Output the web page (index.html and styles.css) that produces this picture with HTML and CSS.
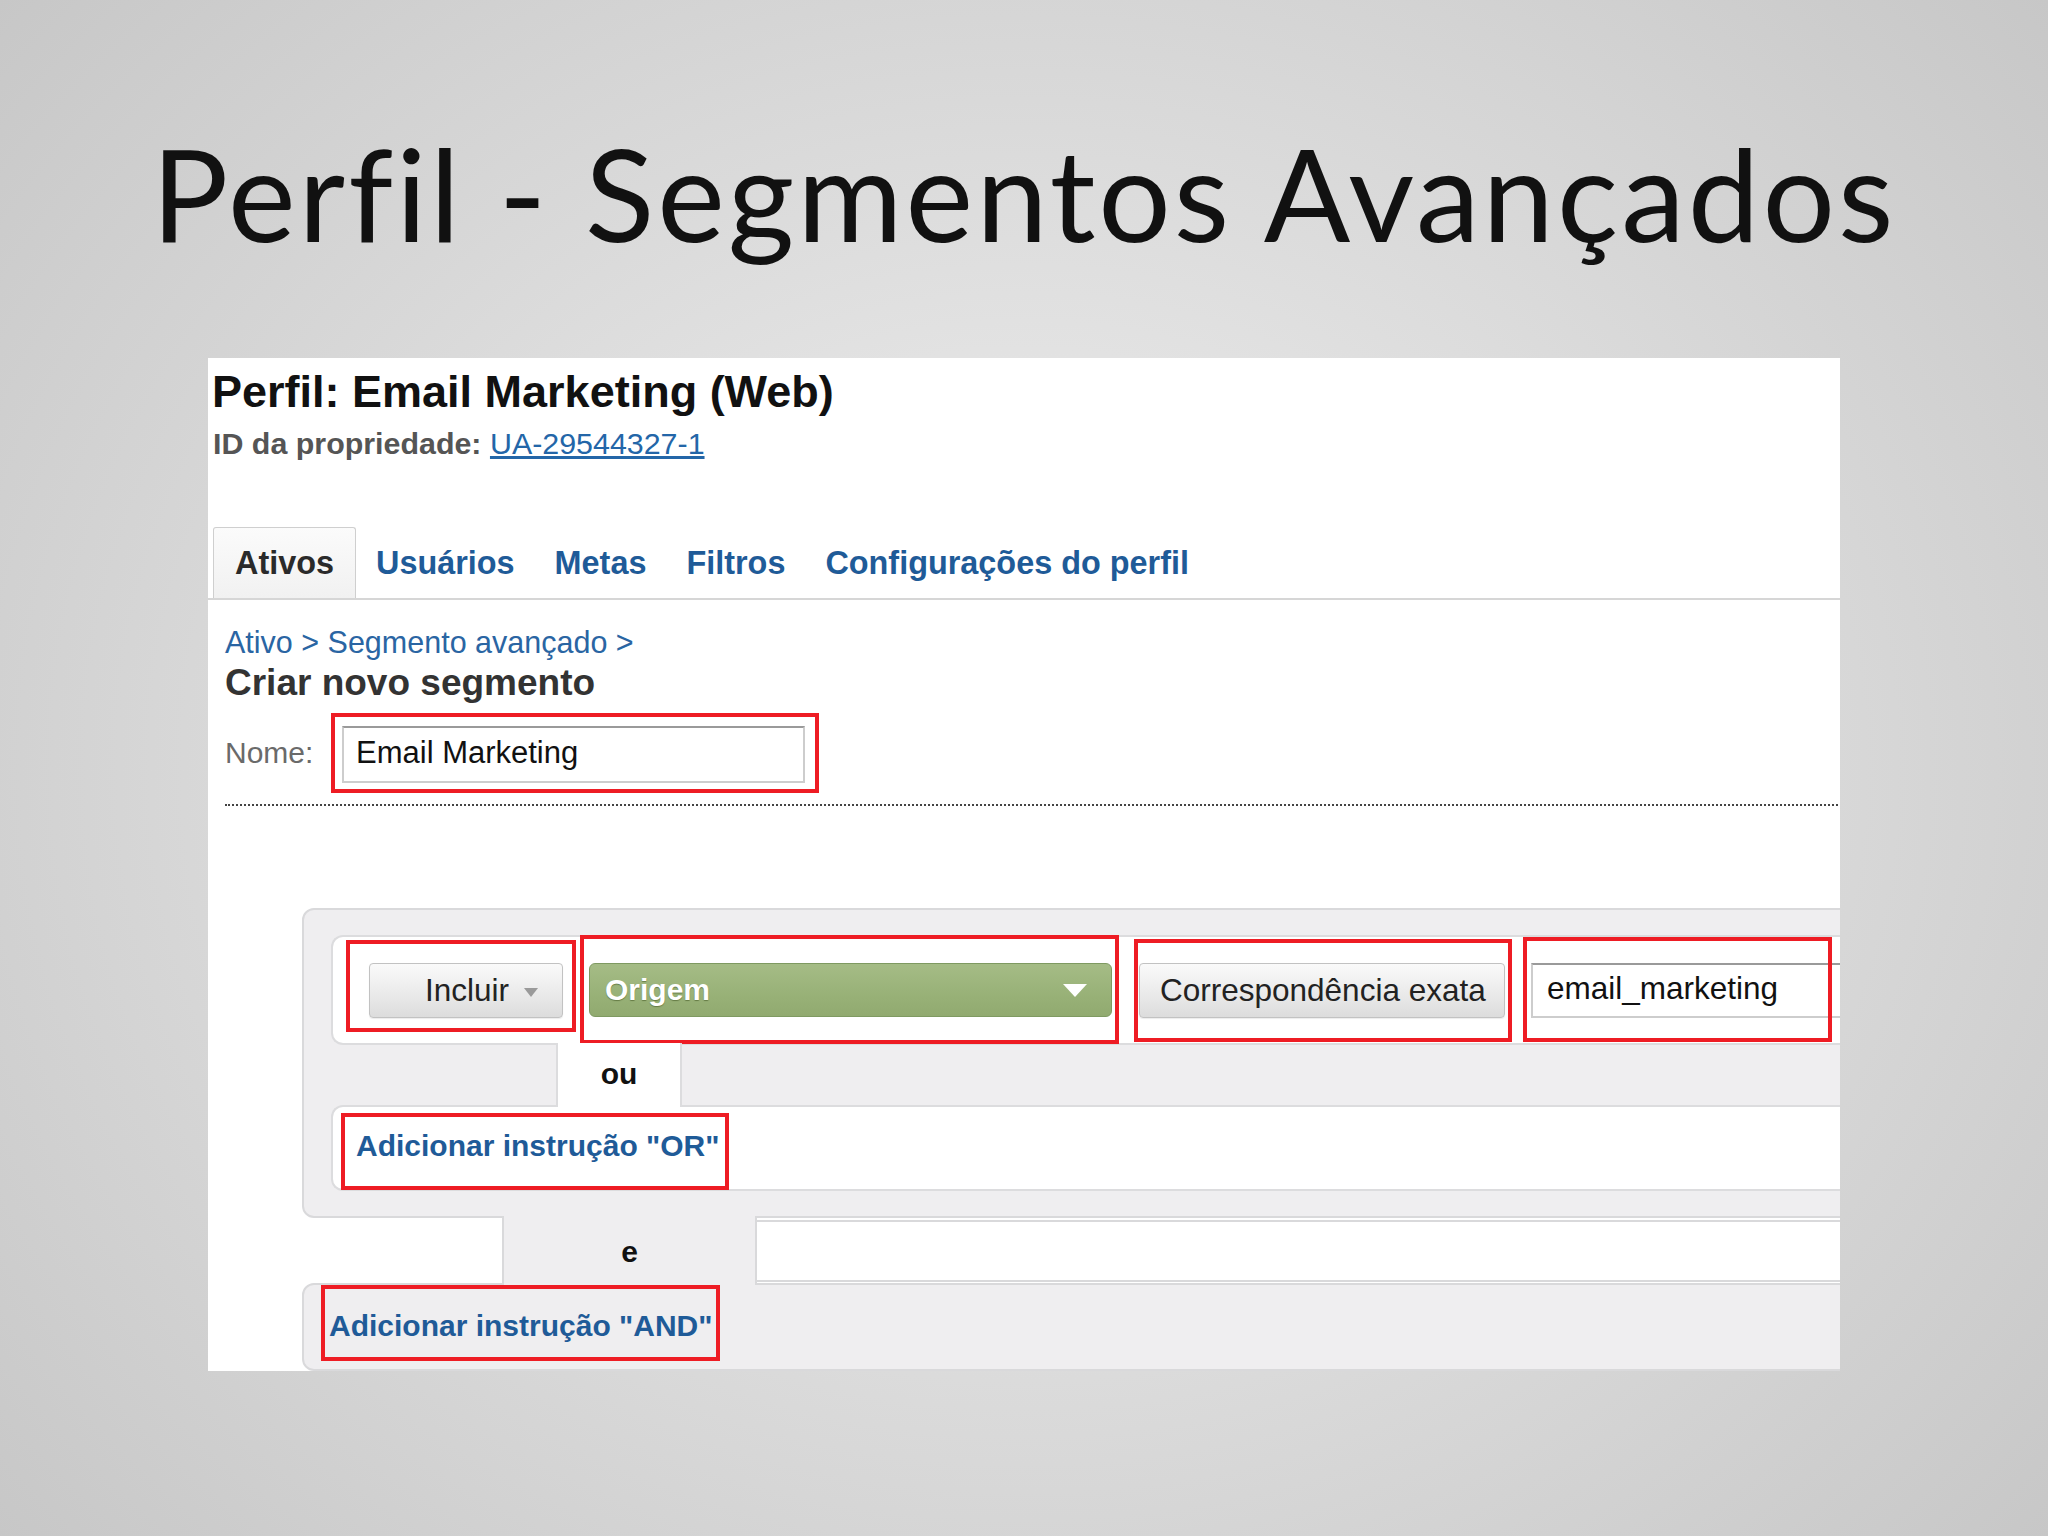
FILE: index.html
```html
<!DOCTYPE html>
<html lang="pt">
<head>
<meta charset="utf-8">
<title>Perfil - Segmentos Avançados</title>
<link rel="stylesheet" href="styles.css">
</head>
<body>
<div class="slide">
  <h1 class="slide-title">Perfil - Segmentos Avançados</h1>
  <div class="shot">
    <div class="profile-title">Perfil: Email Marketing (Web)</div>
    <div class="prop-id"><span class="prop-label">ID da propriedade:</span> <span class="prop-link">UA-29544327-1</span></div>
    <div class="tabs">
      <span class="tab active">Ativos</span>
      <span class="tab">Usuários</span>
      <span class="tab">Metas</span>
      <span class="tab">Filtros</span>
      <span class="tab">Configurações do perfil</span>
    </div>
    <div class="content">
      <div class="crumb">Ativo &gt; Segmento avançado &gt;</div>
      <div class="page-h">Criar novo segmento</div>
      <div class="name-row">
        <span class="name-label">Nome:</span>
        <div class="mark mark-name"><div class="field name-input">Email Marketing</div></div>
      </div>
      <div class="dotted"></div>
    </div>
    <div class="builder">
      <div class="group">
        <div class="cond-row">
          <div class="mark mark-incl"><div class="btn btn-incl">Incluir<span class="caret-gray"></span></div></div>
          <div class="mark mark-origem"><div class="dim-select">Origem<span class="caret-white"></span></div></div>
          <div class="mark mark-corr"><div class="btn btn-corr">Correspondência exata</div></div>
          <div class="mark mark-email"><div class="field email-input">email_marketing</div></div>
        </div>
        <div class="or-conn"><div class="ou">ou</div></div>
        <div class="or-row">
          <div class="mark mark-or"><span class="add-link">Adicionar instrução "OR"</span></div>
        </div>
      </div>
      <div class="and-conn">
        <div class="and-spacer"></div>
        <div class="e-col">e</div>
        <div class="e-rest"></div>
      </div>
      <div class="group group-and">
        <div class="mark mark-and"><span class="add-link">Adicionar instrução "AND"</span></div>
      </div>
    </div>
  </div>
</div>
</body>
</html>
```
FILE: styles.css
```css
html, body {
  margin: 0;
  padding: 0;
}

body {
  font-family: "Liberation Sans", Arial, sans-serif;
}

.slide {
  width: 2048px;
  height: 1536px;
  overflow: hidden;
  background: radial-gradient(ellipse 68% 78% at 50% 50%, #e8e8e8 0%, #e2e2e2 35%, #d5d5d5 65%, #c6c6c6 100%);
}

.slide-title {
  margin: 0;
  padding-top: 116px;
  font-family: Lato, "Open Sans", sans-serif;
  font-weight: 400;
  font-size: 128px;
  line-height: 154px;
  letter-spacing: 3px;
  text-align: center;
  color: #111;
}

.shot {
  margin: 88px 0 0 208px;
  width: 1632px;
  height: 1013px;
  background: #fff;
  overflow: hidden;
  padding-top: 9px;
  box-sizing: border-box;
}

.profile-title {
  padding-left: 4px;
  font-weight: 700;
  font-size: 45px;
  line-height: 50px;
  color: #111;
}

.prop-id {
  margin-top: 8px;
  padding-left: 5px;
  font-size: 30.4px;
  line-height: 36px;
}

.prop-label {
  font-weight: 700;
  color: #555;
}

.prop-link {
  color: #2366a8;
  text-decoration: underline;
}

.tabs {
  margin-top: 66px;
  padding-left: 5px;
  display: flex;
  border-bottom: 2px solid #d6d6d6;
}

.tab {
  padding: 17px 20px;
  border-top: 1px solid transparent;
  font-weight: 700;
  font-size: 32.4px;
  line-height: 36px;
  color: #1f5b98;
}

.tab.active {
  padding: 17px 21px;
  color: #2a2a2a;
  border: 1px solid #cfcfcf;
  border-bottom: none;
  border-radius: 3px 3px 0 0;
  background: linear-gradient(#fbfbfb, #f1f1f1);
}

.content {
  padding-left: 17px;
}

.crumb {
  margin-top: 24px;
  font-size: 30.5px;
  line-height: 36px;
  color: #2a65a3;
}

.page-h {
  margin-top: 3px;
  font-weight: 700;
  font-size: 37px;
  line-height: 40px;
  color: #333;
}

.name-row {
  margin-top: 10px;
  display: flex;
  align-items: baseline;
}

.name-label {
  width: 106px;
  font-size: 30px;
  color: #6a6a6a;
}

.mark {
  position: relative;
  box-sizing: border-box;
  flex: none;
}

.mark::after {
  content: "";
  position: absolute;
  inset: 0;
  border: 4px solid #ee1c24;
  pointer-events: none;
}

.mark-name {
  width: 488px;
  height: 80px;
  padding: 13px 0 0 11px;
}

.field {
  box-sizing: border-box;
  background: #fff;
  border: 2px solid #cdcdcd;
  border-top-color: #9a9a9a;
  font-size: 31px;
  color: #111;
  white-space: nowrap;
}

.name-input {
  width: 463px;
  height: 57px;
  padding-left: 12px;
  line-height: 49px;
}

.dotted {
  margin: 11px 2px 0 0;
  border-top: 2px dotted #444;
}

.builder {
  margin: 102px 0 0 94px;
  width: 1760px;
}

.group {
  box-sizing: border-box;
  background: #efeef0;
  border: 2px solid #d9d9db;
  border-radius: 12px 0 0 12px;
  padding: 25px 0 25px 27px;
}

.cond-row {
  box-sizing: border-box;
  height: 110px;
  background: #fff;
  border: 2px solid #dcdcde;
  border-right: none;
  border-radius: 12px 0 0 12px;
  display: flex;
  align-items: flex-start;
}

.mark-incl {
  margin: 3px 0 0 13px;
  width: 230px;
  height: 92px;
  padding: 23px 0 0 23px;
}

.btn {
  box-sizing: border-box;
  height: 55px;
  border: 1px solid #c2c2c2;
  border-radius: 4px;
  background: linear-gradient(#fafafa, #e9e9e9 60%, #dcdcdc);
  font-size: 31.5px;
  line-height: 53px;
  color: #222;
  white-space: nowrap;
  box-shadow: 0 1px 1px rgba(0, 0, 0, 0.08);
}

.btn-incl {
  width: 194px;
  padding-left: 55px;
  display: flex;
  align-items: center;
}

.caret-gray {
  margin: 4px 0 0 15px;
  width: 0;
  height: 0;
  border-left: 7px solid transparent;
  border-right: 7px solid transparent;
  border-top: 9px solid #9a9a9a;
}

.mark-origem {
  margin: -2px 0 0 4px;
  width: 539px;
  height: 109px;
  padding: 28px 0 0 9px;
}

.dim-select {
  box-sizing: border-box;
  width: 523px;
  height: 54px;
  border: 1px solid #7f9a62;
  border-radius: 6px;
  background: linear-gradient(#a5bc86, #98b177 60%, #91aa70);
  padding: 0 24px 0 15px;
  display: flex;
  align-items: center;
  justify-content: space-between;
  font-weight: 700;
  font-size: 30px;
  line-height: 52px;
  color: #fff;
  text-shadow: 0 1px 1px rgba(60, 80, 30, 0.55);
}

.caret-white {
  width: 0;
  height: 0;
  border-left: 12px solid transparent;
  border-right: 12px solid transparent;
  border-top: 13px solid #fff;
}

.mark-corr {
  margin: 2px 0 0 15px;
  width: 378px;
  height: 103px;
  padding: 24px 0 0 5px;
}

.btn-corr {
  width: 366px;
  padding-left: 20px;
}

.mark-email {
  margin: 0 0 0 11px;
  width: 309px;
  height: 105px;
  padding: 26px 0 0 8px;
}

.email-input {
  width: 420px;
  height: 55px;
  padding-left: 14px;
  font-size: 31.5px;
  line-height: 47px;
}

.or-conn {
  display: flex;
  height: 60px;
}

.ou {
  position: relative;
  z-index: 1;
  box-sizing: border-box;
  margin: -2px 0 -2px 225px;
  width: 126px;
  height: 64px;
  padding-top: 13px;
  background: #fff;
  border-left: 2px solid #dcdcde;
  border-right: 2px solid #dcdcde;
  text-align: center;
  font-weight: 700;
  font-size: 30px;
  line-height: 36px;
  color: #111;
}

.or-row {
  box-sizing: border-box;
  height: 86px;
  background: #fff;
  border: 2px solid #dcdcde;
  border-right: none;
  border-radius: 12px 0 0 12px;
  display: flex;
  align-items: flex-start;
}

.mark-or {
  margin: 6px 0 0 8px;
  width: 388px;
  height: 77px;
  padding: 15px 0 0 15px;
}

.add-link {
  display: block;
  font-weight: 700;
  font-size: 30px;
  line-height: 36px;
  color: #1f5b98;
  white-space: nowrap;
}

.and-conn {
  display: flex;
  height: 65px;
}

.and-spacer {
  width: 200px;
  flex: none;
}

.e-col {
  position: relative;
  z-index: 1;
  flex: none;
  box-sizing: border-box;
  margin: -2px 0 -2px 0;
  width: 255px;
  height: 69px;
  padding-top: 18px;
  background: #efeef0;
  border-left: 2px solid #d9d9db;
  border-right: 2px solid #d9d9db;
  text-align: center;
  font-weight: 700;
  font-size: 30px;
  line-height: 36px;
  color: #111;
}

.e-rest {
  flex: 1;
  box-sizing: border-box;
  margin-top: 2px;
  height: 62px;
  background: #fff;
  border-top: 2px solid #d9d9db;
  border-bottom: 2px solid #d9d9db;
}

.group-and {
  height: 88px;
  padding: 0 0 0 17px;
}

.mark-and {
  width: 399px;
  height: 76px;
  padding: 23px 0 0 8px;
}
```
